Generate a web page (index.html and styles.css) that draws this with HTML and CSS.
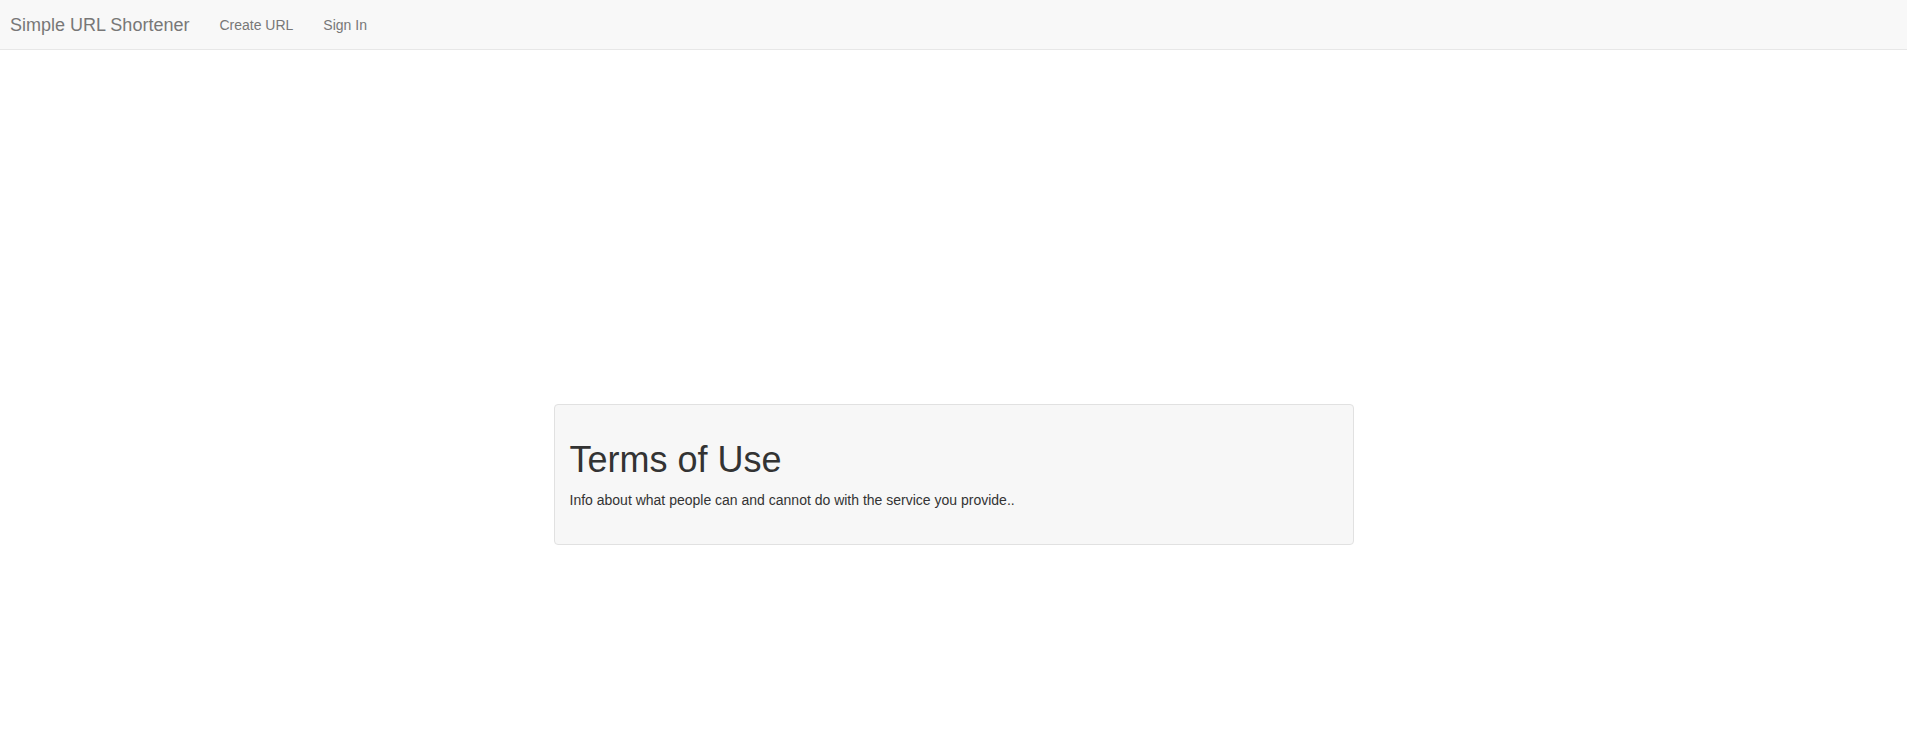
FILE: index.html
```html
<!DOCTYPE html>
<html>
<head>
    <meta charset="UTF-8">
    <meta name="viewport" content="width=device-width, initial-scale=1.0">
    <title>Simple URL Shortener - Terms of Use</title>
    <link rel="stylesheet" href="styles.css">
</head>
<body>
    <nav class="navbar">
        <a class="brand" href="#">Simple URL Shortener</a>
        <ul class="nav-links">
            <li><a href="#">Create URL</a></li>
            <li><a href="#">Sign In</a></li>
        </ul>
    </nav>

    <main class="content">
        <div class="panel">
            <h1>Terms of Use</h1>
            <p>Info about what people can and cannot do with the service you provide..</p>
        </div>
    </main>
</body>
</html>
```

FILE: styles.css
```css
body {
    margin: 0;
    font-family: "Liberation Sans", Arial, Helvetica, sans-serif;
    font-size: 14px;
    line-height: 20px;
    color: #333;
    background: #fff;
}

a {
    text-decoration: none;
}

/* Navbar */
.navbar {
    display: flex;
    align-items: center;
    height: 49px;
    background-color: #f8f8f8;
    border-bottom: 1px solid #e7e7e7;
}

.brand {
    padding: 0 15px 0 10px;
    font-size: 18px;
    color: #777;
}

.nav-links {
    display: flex;
    margin: 0;
    padding: 0;
    list-style: none;
}

.nav-links a {
    display: block;
    padding: 15px;
    color: #777;
}

/* Content */
.content {
    padding-top: 354px;
}

.panel {
    width: 768px;
    margin: 0 auto;
    padding: 35px 15px 34px 15px;
    background-color: #f7f7f7;
    border: 1px solid #e1e1e1;
    border-radius: 4px;
}

.panel h1 {
    margin: 0 0 10px;
    font-size: 36px;
    font-weight: 500;
    line-height: 1.1;
}

.panel p {
    margin: 0;
}
```
